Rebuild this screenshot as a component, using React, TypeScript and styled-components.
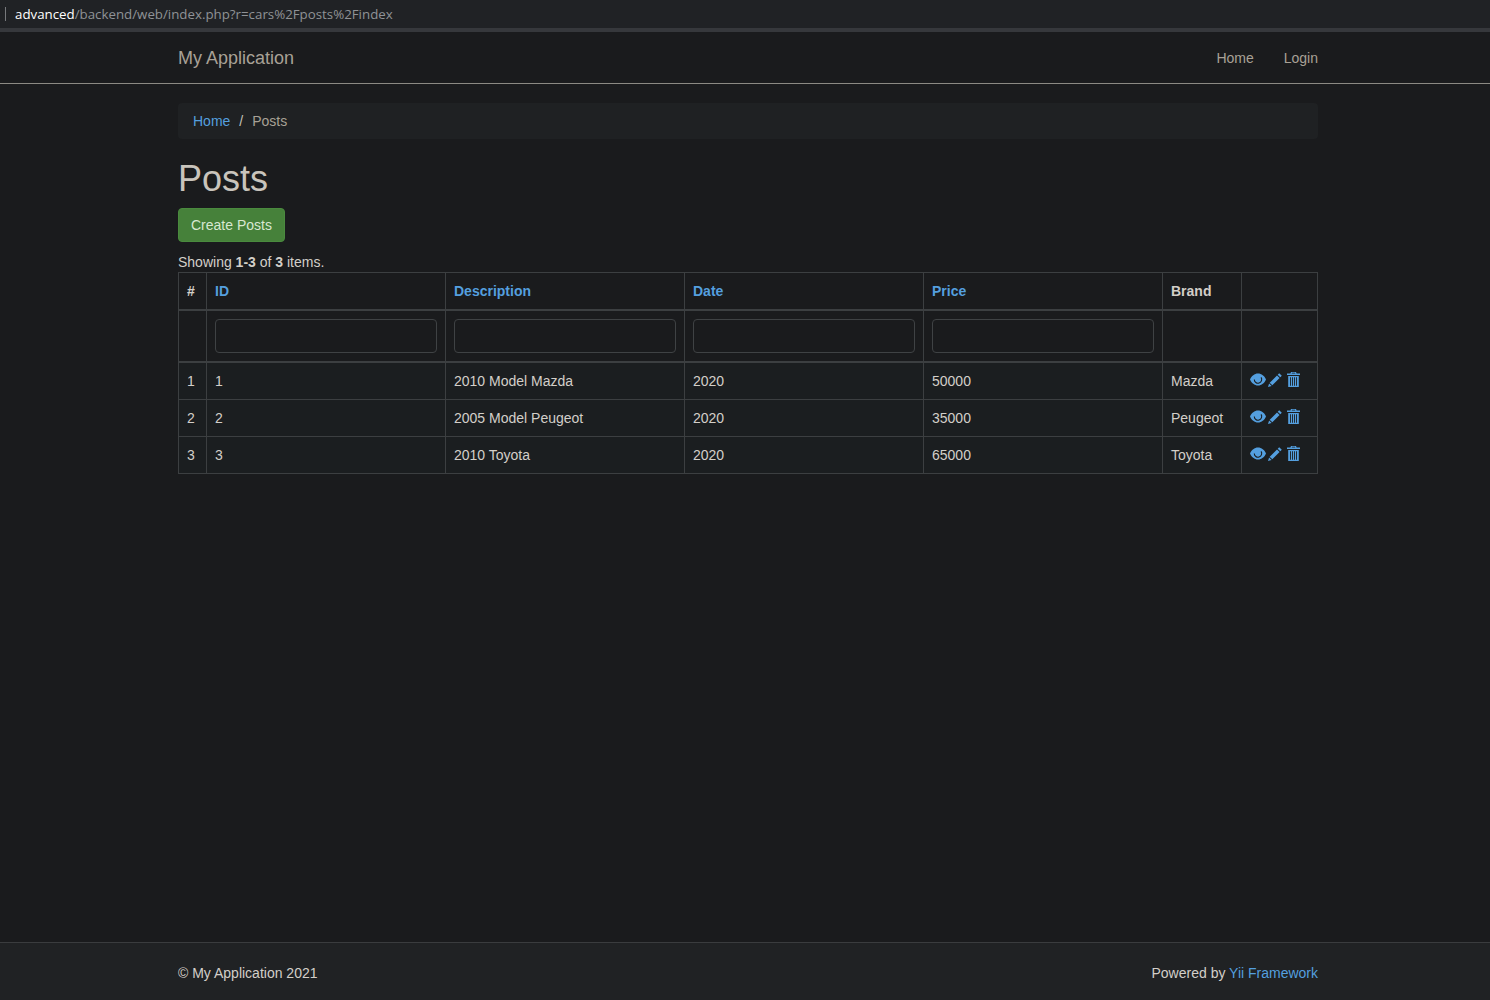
import React from "react";
import styled, { createGlobalStyle } from "styled-components";

const Global = createGlobalStyle`
  html, body { margin: 0; padding: 0; height: 100%; }
  body {
    background: #1a1b1d;
    color: #d3cfc9;
    font-family: "Liberation Sans", Arial, sans-serif;
    font-size: 14px;
    line-height: 21px;
  }
`;

const Page = styled.div`
  height: 1000px;
  display: flex;
  flex-direction: column;
  overflow: hidden;
`;

const AddressBar = styled.div`
  height: 28px;
  background: #202225;
  border-bottom: 4px solid #36383c;
  display: flex;
  align-items: center;
  padding-left: 5px;
  font-family: "Open Sans", sans-serif;
  font-size: 13.3px;
  color: #8f9296;
  flex: none;
`;

const Caret = styled.span`
  width: 1px;
  height: 14px;
  background: #77797c;
  margin-right: 9px;
`;

const Host = styled.span`
  color: #ffffff;
`;

const Navbar = styled.nav`
  height: 49px;
  padding: 2px 0 0 6px;
  flex: none;
  border-bottom: 1px solid #8c8a84;
  display: flex;
  justify-content: center;
`;

const Container = styled.div`
  width: 1140px;
  flex: none;
`;

const NavInner = styled(Container)`
  display: flex;
  align-items: center;
  justify-content: space-between;
`;

const Brand = styled.a`
  font-size: 18px;
  color: #a8a196;
`;

const NavLinks = styled.div`
  display: flex;
  gap: 30px;
`;

const NavLink = styled.a`
  color: #a8a196;
`;

const Main = styled.main`
  flex: 1;
  display: flex;
  justify-content: center;
  padding: 19px 0 0 6px;
`;

const Breadcrumb = styled.ol`
  list-style: none;
  margin: 0 0 16px;
  padding: 7.5px 15px;
  background: #1f2123;
  border-radius: 4px;
  display: flex;
  align-items: center;
`;

const Crumb = styled.li`
  color: #a8a196;
`;

const Separator = styled.span`
  color: #c5c1ba;
  padding: 0 9px;
`;

const Link = styled.a`
  color: #549fdf;
`;

const Title = styled.h1`
  margin: 0 0 8px;
  padding-top: 2px;
  font-size: 36px;
  font-weight: 500;
  line-height: 43px;
  color: #c9c4bc;
`;

const CreateButton = styled.a`
  display: inline-block;
  box-sizing: border-box;
  height: 34px;
  padding: 6px 12px;
  background: #46813a;
  border: 1px solid #4a8a3e;
  border-radius: 4px;
  color: #d8e8d2;
`;

const Summary = styled.div`
  margin-top: 10px;
  line-height: 20px;
  color: #d3cfc9;
`;

const Table = styled.table`
  width: 1140px;
  table-layout: fixed;
  border-collapse: collapse;
`;

const HeadCell = styled.th`
  border: 1px solid #3c3f41;
  border-bottom-width: 2px;
  padding: 8px 8px 7px;
  text-align: left;
  font-weight: 700;
  color: #d3cfc9;
`;

const FilterCell = styled.td`
  border: 1px solid #3c3f41;
  border-bottom-width: 2px;
  padding: 8px;
`;

const FilterInput = styled.input`
  display: block;
  box-sizing: border-box;
  width: 100%;
  height: 34px;
  background: #1a1b1d;
  border: 1px solid #3f4244;
  border-radius: 4px;
  outline: none;
`;

const Row = styled.tr`
  background: #1b1e20;
`;

const Cell = styled.td`
  border: 1px solid #3c3f41;
  padding: 8px 8px 7px;
  color: #d3cfc9;
`;

const Actions = styled.div`
  display: flex;
  align-items: center;
  height: 19px;
  margin: -4px 0 0 -0.5px;
  gap: 2px;
`;

const ActionIcon = styled.svg<{ $w: number; $h: number }>`
  width: ${(p) => p.$w}px;
  height: ${(p) => p.$h}px;
  color: #549fdf;
  display: block;
  flex: none;
`;

const TrashIcon = styled(ActionIcon)`
  margin-left: 3.5px;
`;

const Footer = styled.footer`
  height: 58px;
  padding: 4px 0 0 6px;
  box-sizing: border-box;
  flex: none;
  background: #202224;
  border-top: 1px solid #3a3c3e;
  display: flex;
  justify-content: center;
`;

const FootInner = styled(Container)`
  display: flex;
  align-items: center;
  justify-content: space-between;
`;

const rows = [
  ["1", "1", "2010 Model Mazda", "2020", "50000", "Mazda"],
  ["2", "2", "2005 Model Peugeot", "2020", "35000", "Peugeot"],
  ["3", "3", "2010 Toyota", "2020", "65000", "Toyota"],
];

const widths = [28, 239, 239, 239, 239, 79, 76];

const RowActions = () => (
  <Actions>
    <ActionIcon $w={16} $h={13} viewBox="0 0 16 13">
      <path
        fill="currentColor"
        d="M8 .5C4.5.5 1.5 3 0 6.5c1.5 3.5 4.5 6 8 6s6.5-2.5 8-6C14.5 3 11.5.5 8 .5z"
      />
      <path
        fill="none"
        stroke="#1b1e20"
        strokeWidth="1.1"
        d="M4.3 6.5A3.7 3.7 0 1 0 11.03 4.38"
      />
    </ActionIcon>
    <ActionIcon $w={14} $h={14} viewBox="0 0 14 14">
      <path
        fill="currentColor"
        d="M11.2 0.2l2.6 2.6-1.5 1.5-2.6-2.6zM9 2.4l2.6 2.6-7.3 7.3-2.6-2.6zM1.1 10.4l2.5 2.5L0 14z"
      />
    </ActionIcon>
    <TrashIcon $w={13} $h={15} viewBox="0 0 13 15">
      <path
        fill="currentColor"
        fillRule="evenodd"
        d="M4 0h5l.6 1.5H13V3H0V1.5h3.4zM5 .8l-.3.7h3.6L8 .8z"
      />
      <path
        fill="currentColor"
        fillRule="evenodd"
        d="M1.2 4h10.6v11H1.2zM3 5.2v8.6h.9V5.2zM5 5.2v8.6h.9V5.2zM7.1 5.2v8.6H8V5.2zM9.1 5.2v8.6h.9V5.2z"
      />
    </TrashIcon>
  </Actions>
);

export default function App() {
  return (
    <Page>
      <Global />
      <AddressBar>
        <Caret />
        <Host>advanced</Host>/backend/web/index.php?r=cars%2Fposts%2Findex
      </AddressBar>
      <Navbar>
        <NavInner>
          <Brand>My Application</Brand>
          <NavLinks>
            <NavLink>Home</NavLink>
            <NavLink>Login</NavLink>
          </NavLinks>
        </NavInner>
      </Navbar>
      <Main>
        <Container>
          <Breadcrumb>
            <Crumb>
              <Link>Home</Link>
              <Separator>/</Separator>
            </Crumb>
            <Crumb>Posts</Crumb>
          </Breadcrumb>
          <Title>Posts</Title>
          <CreateButton>Create Posts</CreateButton>
          <Summary>
            Showing <b>1-3</b> of <b>3</b> items.
          </Summary>
          <Table>
            <colgroup>
              {widths.map((w, i) => (
                <col key={i} width={w} />
              ))}
            </colgroup>
            <thead>
              <tr>
                <HeadCell>#</HeadCell>
                <HeadCell><Link>ID</Link></HeadCell>
                <HeadCell><Link>Description</Link></HeadCell>
                <HeadCell><Link>Date</Link></HeadCell>
                <HeadCell><Link>Price</Link></HeadCell>
                <HeadCell>Brand</HeadCell>
                <HeadCell />
              </tr>
              <tr>
                <FilterCell />
                {[0, 1, 2, 3].map((i) => (
                  <FilterCell key={i}>
                    <FilterInput type="text" />
                  </FilterCell>
                ))}
                <FilterCell />
                <FilterCell />
              </tr>
            </thead>
            <tbody>
              {rows.map((r) => (
                <Row key={r[0]}>
                  {r.map((c, i) => (
                    <Cell key={i}>{c}</Cell>
                  ))}
                  <Cell>
                    <RowActions />
                  </Cell>
                </Row>
              ))}
            </tbody>
          </Table>
        </Container>
      </Main>
      <Footer>
        <FootInner>
          <span>© My Application 2021</span>
          <span>
            Powered by <Link>Yii Framework</Link>
          </span>
        </FootInner>
      </Footer>
    </Page>
  );
}
